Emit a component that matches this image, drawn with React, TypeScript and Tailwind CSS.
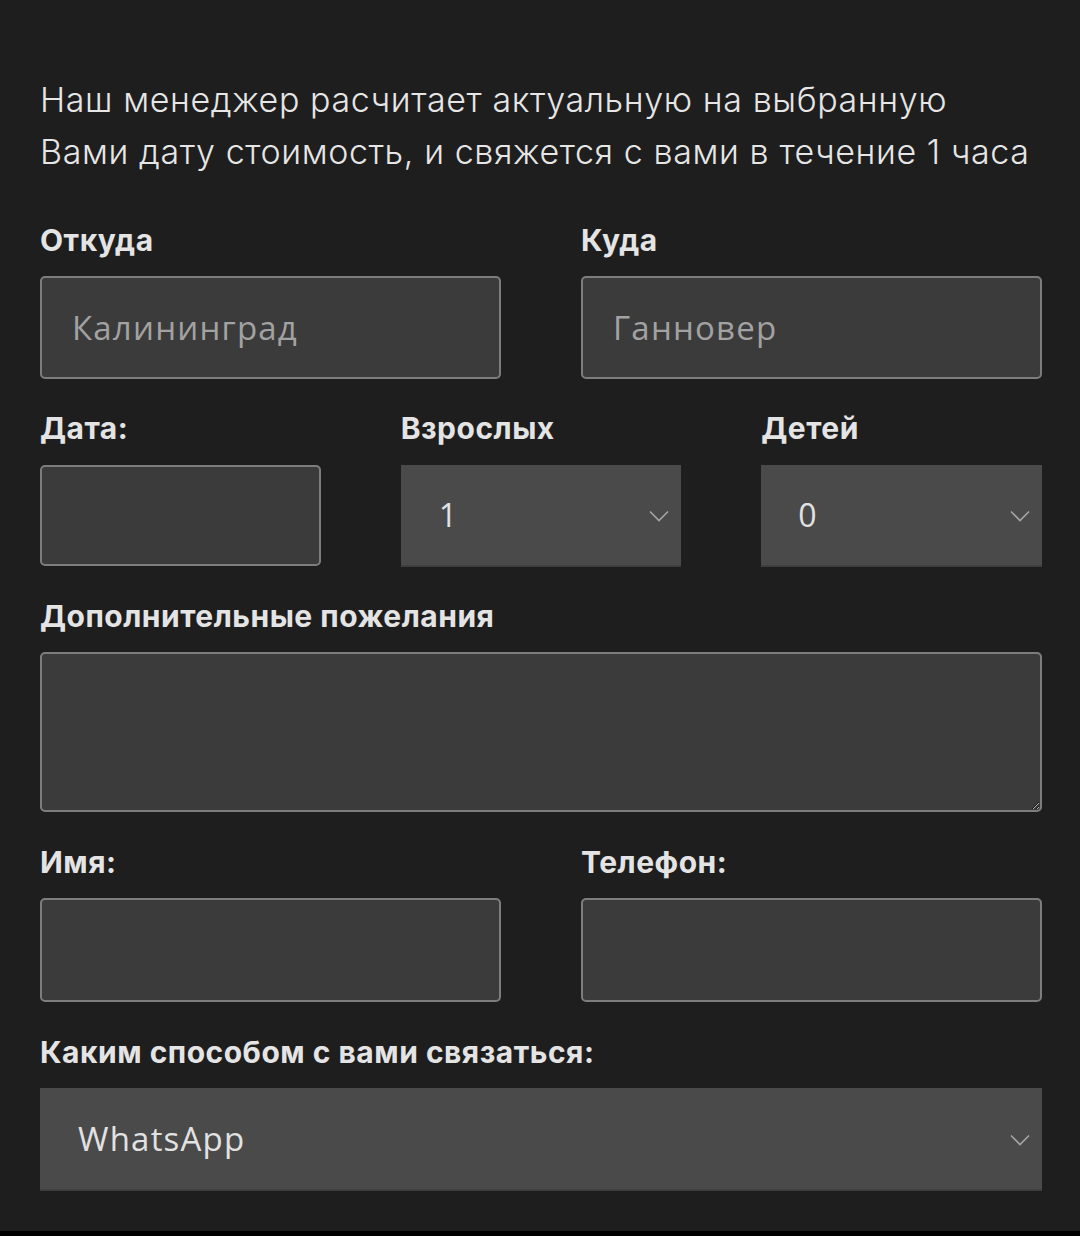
import type { ReactNode } from "react";

const INPUT =
  "h-full w-full rounded-[5px] border-2 border-[#7d7d7d] bg-[#3b3b3b] px-[30px] font-['Open_Sans',sans-serif] text-[33px] tracking-[1.2px] text-[#e0e0e0] outline-none placeholder:text-[#a2a2a2]";

const LABEL =
  "font-['Inter',sans-serif] text-[30px] leading-[36px] font-bold tracking-[0.5px] text-[#e4e4e4]";

function Label({ children, mb = "mb-[18px]" }: { children: ReactNode; mb?: string }) {
  return <div className={LABEL + " " + mb}>{children}</div>;
}

function Chevron() {
  return (
    <svg
      className="pointer-events-none absolute top-1/2 right-[12px] -translate-y-1/2"
      width="20"
      height="12"
      viewBox="0 0 20 12"
      fill="none"
    >
      <path d="M1 1.5 L10 10.5 L19 1.5" stroke="#a5a5a5" strokeWidth="1.6" />
    </svg>
  );
}

function Select({
  value,
  options,
  className,
}: {
  value: string;
  options: string[];
  className?: string;
}) {
  return (
    <div className="relative h-full w-full">
      <select
        defaultValue={value}
        className={
          "h-full w-full appearance-none border-b-2 border-[#3f3f3f] bg-[#4a4a4a] font-['Open_Sans',sans-serif] text-[#e2e2e2] outline-none " +
          (className ?? "")
        }
      >
        {options.map((o) => (
          <option key={o}>{o}</option>
        ))}
      </select>
      <Chevron />
    </div>
  );
}

export default function App() {
  return (
    <div className="min-h-[1236px] bg-[#1e1e1e] font-['Roboto',sans-serif]">
      <div className="pt-[74px] pr-[38px] pb-[40px] pl-[40px]">
        <p className="mb-[44px] font-['Inter',sans-serif] text-[34px] leading-[52px] font-light tracking-[0.6px] text-[#e6e6e6]">
          Наш менеджер расчитает актуальную на выбранную
          <br />
          Вами дату стоимость, и свяжется с вами в течение 1 часа
        </p>

        <div className="grid grid-cols-2 gap-x-[80px]">
          <div>
            <Label>Откуда</Label>
            <div className="h-[103px]">
              <input className={INPUT} placeholder="Калининград" />
            </div>
          </div>
          <div>
            <Label>Куда</Label>
            <div className="h-[103px]">
              <input className={INPUT} placeholder="Ганновер" />
            </div>
          </div>
        </div>

        <div className="mt-[31px] grid grid-cols-3 gap-x-[80px]">
          <div>
            <Label mb="mb-[19px]">Дата:</Label>
            <div className="h-[101px]">
              <input className={INPUT} />
            </div>
          </div>
          <div>
            <Label mb="mb-[19px]">Взрослых</Label>
            <div className="h-[102px]">
              <Select value="1" options={["1", "2", "3", "4"]} className="pl-[38px] text-[32px]" />
            </div>
          </div>
          <div>
            <Label mb="mb-[19px]">Детей</Label>
            <div className="h-[102px]">
              <Select value="0" options={["0", "1", "2", "3"]} className="pl-[37px] text-[32px]" />
            </div>
          </div>
        </div>

        <div className="mt-[31px]">
          <Label>Дополнительные пожелания</Label>
          <textarea className="block h-[160px] w-full resize-y rounded-[5px] border-2 border-[#7d7d7d] bg-[#3b3b3b] px-[30px] py-[20px] font-['Open_Sans',sans-serif] text-[31px] text-[#e0e0e0] outline-none" />
        </div>

        <div className="mt-[32px] grid grid-cols-2 gap-x-[80px]">
          <div>
            <Label>Имя:</Label>
            <div className="h-[104px]">
              <input className={INPUT} />
            </div>
          </div>
          <div>
            <Label>Телефон:</Label>
            <div className="h-[104px]">
              <input className={INPUT} />
            </div>
          </div>
        </div>

        <div className="mt-[32px]">
          <Label>Каким способом с вами связаться:</Label>
          <div className="h-[103px]">
            <Select
              value="WhatsApp"
              options={["WhatsApp", "Telegram", "Viber", "Телефон"]}
              className="pl-[38px] text-[33px] tracking-[1.2px]"
            />
          </div>
        </div>
      </div>
      <div className="h-[5px] bg-black" />
    </div>
  );
}
